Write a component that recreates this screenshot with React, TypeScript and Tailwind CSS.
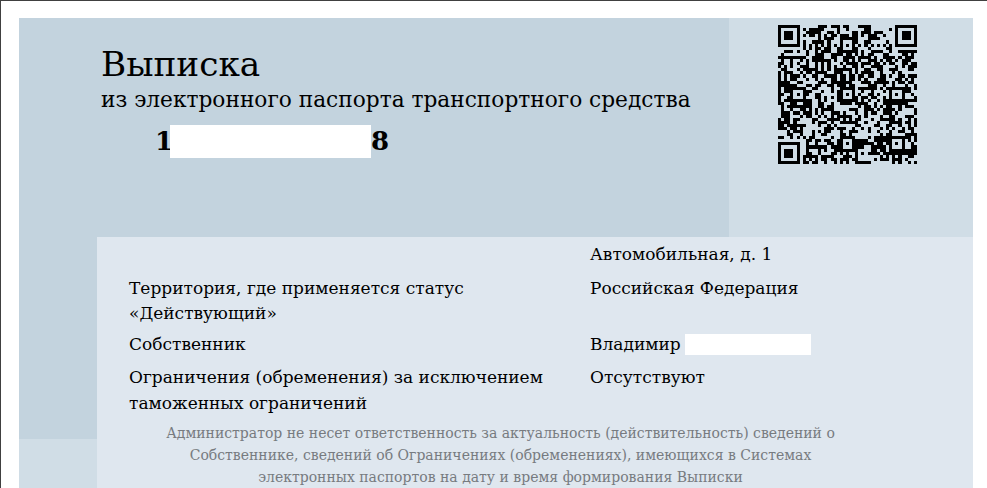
import React from "react";

const N = 45;
function buildQr(): string {
  const m: number[][] = Array.from({ length: N }, () => Array(N).fill(-1));
  const finder = (r: number, c: number) => {
    for (let y = -1; y <= 7; y++)
      for (let x = -1; x <= 7; x++) {
        const yy = r + y, xx = c + x;
        if (yy < 0 || xx < 0 || yy >= N || xx >= N) continue;
        const on = x >= 0 && x <= 6 && y >= 0 && y <= 6 && (x === 0 || x === 6 || y === 0 || y === 6 || (x >= 2 && x <= 4 && y >= 2 && y <= 4));
        m[yy][xx] = on ? 1 : 0;
      }
  };
  finder(0, 0); finder(0, N - 7); finder(N - 7, 0);
  for (let i = 8; i < N - 8; i++) { m[6][i] = i % 2 ? 0 : 1; m[i][6] = i % 2 ? 0 : 1; }
  for (const r of [6, 22, 38]) for (const c of [6, 22, 38]) {
    if ((r === 6 && c === 6) || (r === 6 && c === 38) || (r === 38 && c === 6)) continue;
    for (let y = -2; y <= 2; y++) for (let x = -2; x <= 2; x++)
      m[r + y][c + x] = Math.max(Math.abs(x), Math.abs(y)) === 1 ? 0 : 1;
  }
  let s = 20240611;
  const rnd = () => { s = (s * 1664525 + 1013904223) >>> 0; return (s >>> 16) / 65536; };
  let d = "";
  for (let y = 0; y < N; y++) for (let x = 0; x < N; x++) {
    const v = m[y][x] === -1 ? (rnd() < 0.52 ? 1 : 0) : m[y][x];
    if (v) d += `M${x} ${y}h1v1h-1z`;
  }
  return d;
}

function Row({ left, right, className }: { left?: React.ReactNode; right?: React.ReactNode; className?: string }) {
  return (
    <div className={"flex " + (className ?? "")}>
      <div className="w-[461px] pr-[40px]">{left}</div>
      <div className="flex-1">{right}</div>
    </div>
  );
}

export default function App() {
  const d = React.useMemo(buildQr, []);
  return (
    <div className="h-[488px] w-[987px] overflow-hidden border-t border-l border-[#404040] bg-white pt-[17px] pl-[18px] pr-[14px] text-black" style={{ fontFamily: '"DejaVu Serif", serif' }}>
      <div className="flex h-[219px]">
        <div className="flex-1 bg-[#c3d3de] pt-[26px] pl-[82px]">
          <h1 className="text-[34.3px] leading-[40px] font-normal">Выписка</h1>
          <p className="pt-[1px] text-[21.7px] leading-[30px]">из электронного паспорта транспортного средства</p>
          <div className="mt-[10px] ml-[54px] flex h-[33px] items-center text-[26px] font-bold">
            <span className="tracking-[-3px]">1</span>
            <span className="h-[33px] w-[201px] bg-white" />
            <span>8</span>
          </div>
        </div>
        <div className="w-[244px] bg-[#d0dde6] pt-[7px] pl-[49px]">
          <svg width="139" height="139" viewBox="0 0 45 45" shapeRendering="crispEdges" className="block">
            <path d={d} fill="#000" />
          </svg>
        </div>
      </div>
      <div className="flex h-[251px]">
        <div className="flex w-[78px] flex-col">
          <div className="h-[202px] bg-[#c3d3de]" />
          <div className="flex-1 bg-[#d0dde6]" />
        </div>
        <div className="flex-1 bg-[#dfe7ef] pl-[32px] text-[17px] leading-[25.5px]">
          <Row className="pt-[5px]" right="Автомобильная, д. 1" />
          <Row className="mt-[8px]" left="Территория, где применяется статус «Действующий»" right="Российская Федерация" />
          <Row
            className="mt-[5px]"
            left="Собственник"
            right={
              <div className="flex items-center">
                <span>Владимир</span>
                <span className="ml-[4px] h-[21px] w-[126px] bg-white" />
              </div>
            }
          />
          <Row className="mt-[8px]" left="Ограничения (обременения) за исключением таможенных ограничений" right="Отсутствуют" />
          <p className="mt-[6px] w-[743px] text-center text-[14px] leading-[22px] text-[#777b80]">
            Администратор не несет ответственность за актуальность (действительность) сведений о<br />
            Собственнике, сведений об Ограничениях (обременениях), имеющихся в Системах<br />
            электронных паспортов на дату и время формирования Выписки
          </p>
        </div>
      </div>
    </div>
  );
}
